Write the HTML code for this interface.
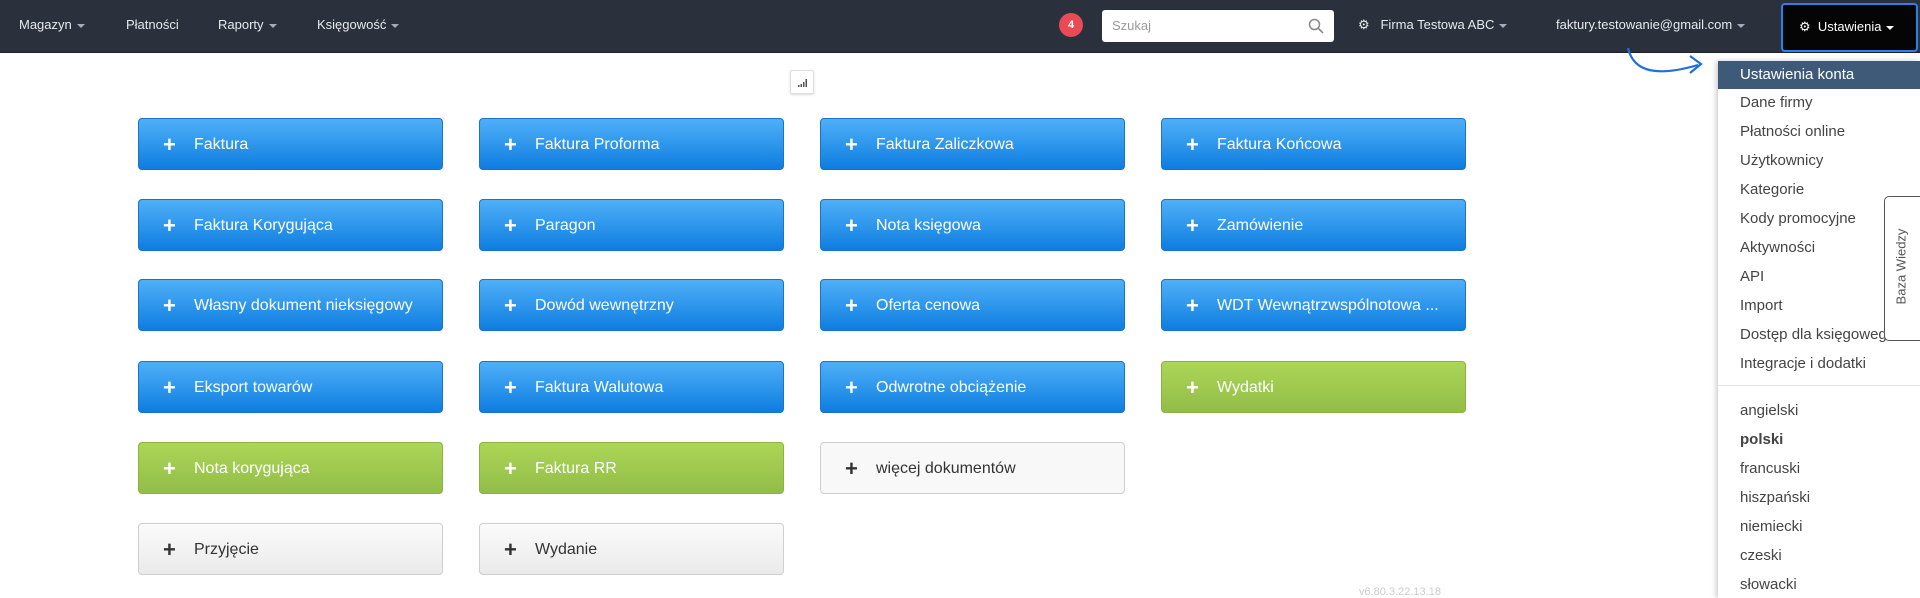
<!DOCTYPE html>
<html><head><meta charset="utf-8"><style>
*{box-sizing:border-box;margin:0;padding:0}
body{width:1920px;height:598px;overflow:hidden;background:#fff;font-family:"Liberation Sans",sans-serif;position:relative}
.nav{position:absolute;left:0;top:0;width:1920px;height:53px;background:#2a313c;border-bottom:1px solid #1d222a}
.nl{position:absolute;top:17px;color:#e6e9ee;font-size:13px}
.car{display:inline-block;width:0;height:0;border-left:4px solid transparent;border-right:4px solid transparent;border-top:4px solid #aab;margin-left:5px;vertical-align:middle}
.btn{position:absolute;width:305px;height:52px;border-radius:4px;color:#fff;font-size:16px;line-height:52px;padding-left:55px}
.btn b{position:absolute;left:24px;top:0;font-size:22px;font-weight:bold}
.blue{background:linear-gradient(#4fb0f8,#0e7de0);border:1px solid #1a74c9}
.green{background:linear-gradient(#acd657,#92bd48);border:1px solid #8ab33f}
.grey{background:linear-gradient(#fbfbfb,#eaeaea);border:1px solid #cfcfcf;color:#333}
.grey b{color:#333}
.dd{position:absolute;left:1718px;top:61px;width:202px;height:537px;background:#fff;box-shadow:-2px 0 5px rgba(0,0,0,.2)}
.it{position:absolute;left:22px;font-size:15px;color:#444}
</style></head><body>
<div class="nav">
<span class="nl" style="left:19px">Magazyn<i class="car"></i></span>
<span class="nl" style="left:126px">Płatności</span>
<span class="nl" style="left:218px">Raporty<i class="car"></i></span>
<span class="nl" style="left:317px">Księgowość<i class="car"></i></span>
<div style="position:absolute;left:1059px;top:13px;width:24px;height:24px;border-radius:50%;background:#e84b55;color:#fff;font-size:11px;font-weight:bold;text-align:center;line-height:24px">4</div>
<div style="position:absolute;left:1102px;top:10px;width:232px;height:32px;background:#fff;border-radius:3px;font-size:13px;color:#999;padding:8px 10px">Szukaj
<svg style="position:absolute;right:10px;top:8px" width="16" height="16" viewBox="0 0 16 16"><circle cx="6.5" cy="6.5" r="5" fill="none" stroke="#888" stroke-width="1.5"/><path d="M10 10l5 5" stroke="#888" stroke-width="1.6"/></svg></div>
<span class="nl" style="left:1358px">&#9881;&nbsp;&nbsp; Firma Testowa ABC<i class="car"></i></span>
<span class="nl" style="left:1556px">faktury.testowanie@gmail.com<i class="car"></i></span>
<div style="position:absolute;left:1781px;top:3px;width:137px;height:49px;background:#050505;border:2px solid #2f7fe8;border-radius:4px;color:#fff;font-size:13px;padding:14px 0 0 16px">&#9881;&nbsp; Ustawienia<i class="car" style="border-top-color:#fff"></i></div>
</div>
<div style="position:absolute;left:790px;top:70px;width:24px;height:24px;border:1px solid #ddd;border-radius:2px;box-shadow:0 1px 2px rgba(0,0,0,.15)"><svg width="22" height="22"><rect x="7" y="14" width="1.5" height="2" fill="#555"/><rect x="9.5" y="13" width="1.5" height="3" fill="#555"/><rect x="12" y="11" width="1.5" height="5" fill="#555"/><rect x="14.5" y="8" width="1.5" height="8" fill="#555"/></svg></div>
<svg style="position:absolute;left:1620px;top:44px" width="110" height="50"><path d="M8 4 C14 30 40 32 78 21" fill="none" stroke="#1f6fdc" stroke-width="2.2"/><path d="M70 12 L81 20 L70 29" fill="none" stroke="#1f6fdc" stroke-width="2.2"/></svg>

<div class="btn blue" style="left:138px;top:118px"><b>+</b>Faktura</div>
<div class="btn blue" style="left:479px;top:118px"><b>+</b>Faktura Proforma</div>
<div class="btn blue" style="left:820px;top:118px"><b>+</b>Faktura Zaliczkowa</div>
<div class="btn blue" style="left:1161px;top:118px"><b>+</b>Faktura Końcowa</div>
<div class="btn blue" style="left:138px;top:199px"><b>+</b>Faktura Korygująca</div>
<div class="btn blue" style="left:479px;top:199px"><b>+</b>Paragon</div>
<div class="btn blue" style="left:820px;top:199px"><b>+</b>Nota księgowa</div>
<div class="btn blue" style="left:1161px;top:199px"><b>+</b>Zamówienie</div>
<div class="btn blue" style="left:138px;top:279px"><b>+</b>Własny dokument nieksięgowy</div>
<div class="btn blue" style="left:479px;top:279px"><b>+</b>Dowód wewnętrzny</div>
<div class="btn blue" style="left:820px;top:279px"><b>+</b>Oferta cenowa</div>
<div class="btn blue" style="left:1161px;top:279px"><b>+</b>WDT Wewnątrzwspólnotowa ...</div>
<div class="btn blue" style="left:138px;top:361px"><b>+</b>Eksport towarów</div>
<div class="btn blue" style="left:479px;top:361px"><b>+</b>Faktura Walutowa</div>
<div class="btn blue" style="left:820px;top:361px"><b>+</b>Odwrotne obciążenie</div>
<div class="btn green" style="left:1161px;top:361px"><b>+</b>Wydatki</div>
<div class="btn green" style="left:138px;top:442px"><b>+</b>Nota korygująca</div>
<div class="btn green" style="left:479px;top:442px"><b>+</b>Faktura RR</div>
<div class="btn grey" style="left:820px;top:442px;background:#f8f8f8"><b>+</b>więcej dokumentów</div>
<div class="btn grey" style="left:138px;top:523px"><b>+</b>Przyjęcie</div>
<div class="btn grey" style="left:479px;top:523px"><b>+</b>Wydanie</div>
<div style="position:absolute;left:1359px;top:586px;font-size:11px;color:#ccc">v6.80.3.22.13.18</div>

<div class="dd">
<div style="position:absolute;left:0;top:0;width:202px;height:28px;background:#3e5a78"></div>
<span class="it" style="top:5px;color:#fff">Ustawienia konta</span>
<span class="it" style="top:33px">Dane firmy</span>
<span class="it" style="top:62px">Płatności online</span>
<span class="it" style="top:91px">Użytkownicy</span>
<span class="it" style="top:120px">Kategorie</span>
<span class="it" style="top:149px">Kody promocyjne</span>
<span class="it" style="top:178px">Aktywności</span>
<span class="it" style="top:207px">API</span>
<span class="it" style="top:236px">Import</span>
<span class="it" style="top:265px">Dostęp dla księgowego</span>
<span class="it" style="top:294px">Integracje i dodatki</span>
<div style="position:absolute;left:0;top:324px;width:202px;height:1px;background:#e5e5e5"></div>
<span class="it" style="top:341px">angielski</span>
<span class="it" style="top:370px;font-weight:bold">polski</span>
<span class="it" style="top:399px">francuski</span>
<span class="it" style="top:428px">hiszpański</span>
<span class="it" style="top:457px">niemiecki</span>
<span class="it" style="top:486px">czeski</span>
<span class="it" style="top:515px">słowacki</span>
</div>
<div style="position:absolute;left:1884px;top:196px;width:40px;height:145px;background:#fff;border:1px solid #555;border-radius:5px 0 0 5px"><div style="position:absolute;left:-34px;top:62px;width:100px;transform:rotate(-90deg);font-size:13px;color:#555;text-align:center">Baza Wiedzy</div></div>
</body></html>
